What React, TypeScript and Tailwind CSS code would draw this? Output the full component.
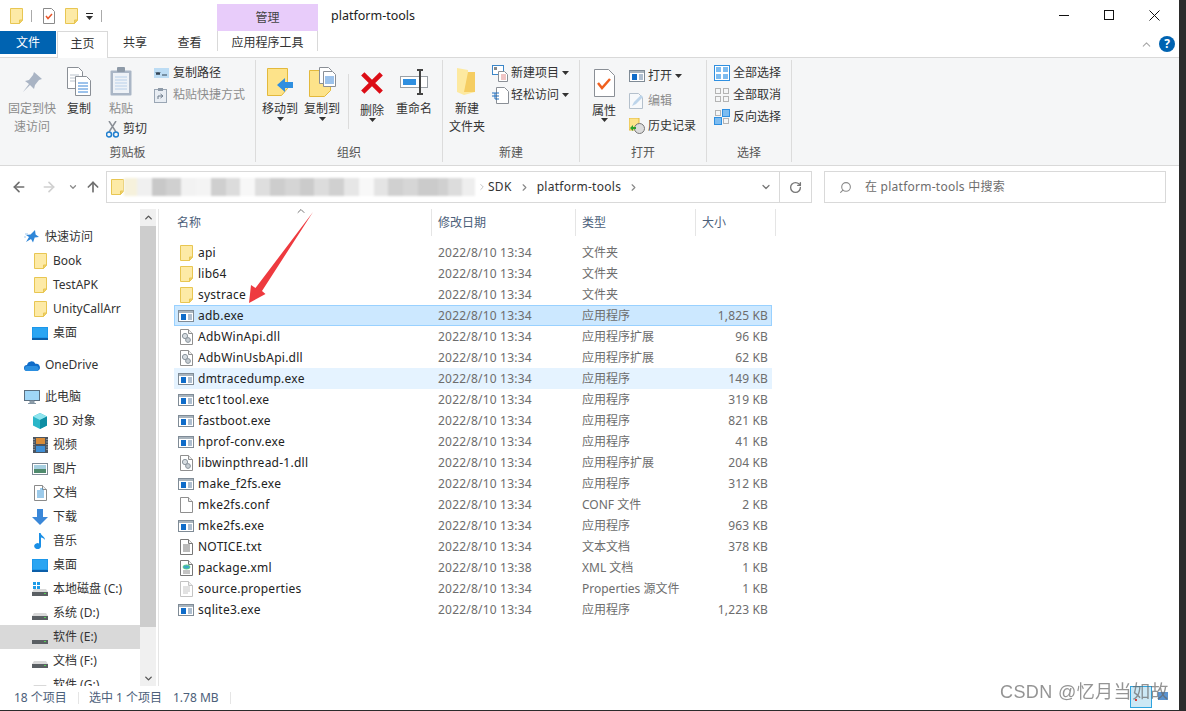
import React from 'react';
import { ArrowLeft, ArrowRight, ArrowUp, ChevronDown, ChevronRight, ChevronUp, RotateCw, Search } from 'lucide-react';

const Caret = () => (
  <svg width="7" height="4" viewBox="0 0 7 4"><path d="M0 0h7L3.5 4z" fill="#333" /></svg>
);

const FolderSm = () => (
  <svg width="13" height="16" viewBox="0 0 13 16">
    <path d="M.5.5h12v11.5l-3 3.5H.5z" fill="#fdeaa6" stroke="#e8c652" />
    <path d="M9.5 15.5V12h3z" fill="#f2d36c" stroke="#e8c652" />
  </svg>
);

const ExeIcon = () => (
  <svg width="16" height="12" viewBox="0 0 16 12">
    <rect x=".5" y=".5" width="15" height="11" fill="#fff" stroke="#7f8b96" />
    <rect x="1" y="1" width="14" height="2" fill="#a9b4bd" />
    <rect x="3" y="4" width="5" height="6" fill="#0f6cc9" />
    <path d="M10 5h4M10 7h4M10 9h4" stroke="#5f7fa0" />
  </svg>
);

const Page = ({ children, stroke = '#8f8f8f' }: { children?: React.ReactNode; stroke?: string }) => (
  <svg width="13" height="16" viewBox="0 0 13 16">
    <path d="M.5.5h8l4 4v11H.5z" fill="#fff" stroke={stroke} />
    <path d="M8.5.5v4h4" fill="#eee" stroke={stroke} />
    {children}
  </svg>
);

const DllIcon = () => (
  <Page>
    <circle cx="5" cy="7" r="2.6" fill="#d7dde2" stroke="#8a949c" />
    <circle cx="8" cy="11" r="2.4" fill="#c6cdd3" stroke="#8a949c" />
  </Page>
);
const ConfIcon = () => <Page />;
const TxtIcon = () => (
  <Page stroke="#777">
    <path d="M3 6h7M3 8h7M3 10h7M3 12h7" stroke="#777" />
  </Page>
);
const XmlIcon = () => (
  <Page stroke="#777">
    <ellipse cx="6.5" cy="7" rx="3.5" ry="2" fill="#3fa7c9" stroke="#5c8" />
    <path d="M3 11h7M3 13h7" stroke="#888" />
  </Page>
);
const PropsIcon = () => (
  <Page stroke="#c4c4c4">
    <path d="M3 6h7M3 8h7M3 10h7M3 12h5" stroke="#c4c4c4" />
  </Page>
);

const StarIcon = () => (
  <svg width="16" height="16" viewBox="0 0 16 16">
    <path d="M11 1l.6 4.5L15 8l-4.3.6L9 13.5 7 10l-5 3 3-5-3-2 4.5-.5z" fill="#2f86d8" />
    <path d="M1 5h3M0 8h2" stroke="#9cc7ee" />
  </svg>
);
const DesktopIcon = () => (
  <svg width="16" height="13" viewBox="0 0 16 13">
    <rect width="16" height="12" fill="#1c97ea" />
    <rect x="1" y="1" width="14" height="9" fill="#2aa5f2" />
    <path d="M0 12h16" stroke="#0b5ea8" strokeWidth="2" />
  </svg>
);
const CloudIcon = () => (
  <svg width="16" height="11" viewBox="0 0 16 11">
    <path d="M3 11a3 3 0 010-6 4.5 4.5 0 018.4-1.2A3.6 3.6 0 0113 11z" fill="#0f6cc9" />
    <path d="M3 11a2.5 2.5 0 01.5-5h9a2.6 2.6 0 01.5 5z" fill="#2b8fe0" />
  </svg>
);
const PcIcon = () => (
  <svg width="16" height="15" viewBox="0 0 16 15">
    <rect x=".5" y=".5" width="15" height="10" fill="#9fd6f7" stroke="#5b6f80" />
    <path d="M6 11h4v2H6zM4 13.5h8" fill="#9aa6b0" stroke="#8395a3" />
  </svg>
);
const CubeIcon = () => (
  <svg width="16" height="16" viewBox="0 0 16 16">
    <path d="M8 0l7 3.5v9L8 16l-7-3.5v-9z" fill="#2bb6c8" />
    <path d="M8 0l7 3.5L8 7 1 3.5z" fill="#8fe4ee" />
    <path d="M8 7l7-3.5v9L8 16z" fill="#0e8ea3" />
  </svg>
);
const FilmIcon = () => (
  <svg width="15" height="16" viewBox="0 0 15 16">
    <rect width="15" height="16" fill="#4b5560" />
    <rect x="3" y="1" width="9" height="6" fill="#d98c38" />
    <rect x="3" y="9" width="9" height="6" fill="#3f8fd6" />
    <path d="M1 2v12M14 2v12" stroke="#ccc" strokeDasharray="1 1.5" />
  </svg>
);
const PictureIcon = () => (
  <svg width="16" height="12" viewBox="0 0 16 12">
    <rect x=".5" y=".5" width="15" height="11" fill="#fff" stroke="#7f8b96" />
    <rect x="2" y="2" width="12" height="4" fill="#a6cfe0" />
    <rect x="2" y="6" width="12" height="4" fill="#4f8a6d" />
  </svg>
);
const DocIcon = () => (
  <Page stroke="#8a8a8a">
    <path d="M6 4h3M3 6h7M3 8h7M3 10h7M3 12h7" stroke="#3b96d6" />
  </Page>
);
const DownloadIcon = () => (
  <svg width="16" height="16" viewBox="0 0 16 16">
    <path d="M5 0h6v8h5l-8 8-8-8h5z" fill="#3a87d8" />
  </svg>
);
const MusicIcon = () => (
  <svg width="12" height="16" viewBox="0 0 12 16">
    <path d="M5 0h1.6c.4 3 4.400 3.500 4.400 7-1-1.500-2.500-2-4-2.400V13a3.400 3 0 11-2-2.600z" fill="#1a8fe6" />
  </svg>
);
const DriveIcon = ({ win }: { win?: boolean }) => (
  <svg width="16" height="14" viewBox="0 0 16 14">
    {win && <path d="M1 0h3v3H1zM5 0h3v3H5zM1 4h3v3H1zM5 4h3v3H5z" fill="#1c9be8" />}
    <path d="M2 7h12l2 3H0z" fill="#d9d9d9" />
    <rect y="10" width="16" height="4" fill="#5a5f63" />
    <rect x="12" y="11" width="2" height="1" fill="#52d052" />
  </svg>
);

const navItems = [
  { label: '快速访问', icon: <StarIcon />, top: true },
  { label: 'Book', icon: <FolderSm /> },
  { label: 'TestAPK', icon: <FolderSm /> },
  { label: 'UnityCallArr', icon: <FolderSm /> },
  { label: '桌面', icon: <DesktopIcon />, gapAfter: true },
  { label: 'OneDrive', icon: <CloudIcon />, top: true, gapAfter: true },
  { label: '此电脑', icon: <PcIcon />, top: true },
  { label: '3D 对象', icon: <CubeIcon /> },
  { label: '视频', icon: <FilmIcon /> },
  { label: '图片', icon: <PictureIcon /> },
  { label: '文档', icon: <DocIcon /> },
  { label: '下载', icon: <DownloadIcon /> },
  { label: '音乐', icon: <MusicIcon /> },
  { label: '桌面', icon: <DesktopIcon /> },
  { label: '本地磁盘 (C:)', icon: <DriveIcon win /> },
  { label: '系统 (D:)', icon: <DriveIcon /> },
  { label: '软件 (E:)', icon: <DriveIcon />, selected: true },
  { label: '文档 (F:)', icon: <DriveIcon /> },
  { label: '软件 (G:)', icon: <DriveIcon /> },
];

const D = '2022/8/10 13:34';
const files = [
  { name: 'api', date: D, type: '文件夹', size: '', icon: <FolderSm /> },
  { name: 'lib64', date: D, type: '文件夹', size: '', icon: <FolderSm /> },
  { name: 'systrace', date: D, type: '文件夹', size: '', icon: <FolderSm /> },
  { name: 'adb.exe', date: D, type: '应用程序', size: '1,825 KB', icon: <ExeIcon />, state: 'selected' },
  { name: 'AdbWinApi.dll', date: D, type: '应用程序扩展', size: '96 KB', icon: <DllIcon /> },
  { name: 'AdbWinUsbApi.dll', date: D, type: '应用程序扩展', size: '62 KB', icon: <DllIcon /> },
  { name: 'dmtracedump.exe', date: D, type: '应用程序', size: '149 KB', icon: <ExeIcon />, state: 'hover' },
  { name: 'etc1tool.exe', date: D, type: '应用程序', size: '319 KB', icon: <ExeIcon /> },
  { name: 'fastboot.exe', date: D, type: '应用程序', size: '821 KB', icon: <ExeIcon /> },
  { name: 'hprof-conv.exe', date: D, type: '应用程序', size: '41 KB', icon: <ExeIcon /> },
  { name: 'libwinpthread-1.dll', date: D, type: '应用程序扩展', size: '204 KB', icon: <DllIcon /> },
  { name: 'make_f2fs.exe', date: D, type: '应用程序', size: '312 KB', icon: <ExeIcon /> },
  { name: 'mke2fs.conf', date: D, type: 'CONF 文件', size: '2 KB', icon: <ConfIcon /> },
  { name: 'mke2fs.exe', date: D, type: '应用程序', size: '963 KB', icon: <ExeIcon /> },
  { name: 'NOTICE.txt', date: D, type: '文本文档', size: '378 KB', icon: <TxtIcon /> },
  { name: 'package.xml', date: '2022/8/10 13:38', type: 'XML 文档', size: '1 KB', icon: <XmlIcon /> },
  { name: 'source.properties', date: D, type: 'Properties 源文件', size: '1 KB', icon: <PropsIcon /> },
  { name: 'sqlite3.exe', date: D, type: '应用程序', size: '1,223 KB', icon: <ExeIcon /> },
];

const blurBlocks = [
  'w-[13px] bg-[#f6f1dc]', 'w-[15px] bg-[#f0f0f0]', 'w-[15px] bg-[#c8c8c8]', 'w-[15px] bg-[#d0d0d0]',
  'w-[15px] bg-[#f2f2f2]', 'w-[15px] bg-[#f4f4f4]', 'w-[15px] bg-[#cfcfcf]', 'w-[15px] bg-[#dcdcdc]',
  'w-[15px] bg-[#f7f7f7]', 'w-[15px] bg-[#dedede]', 'w-[15px] bg-[#cdcdcd]', 'w-[15px] bg-[#d5d5d5]',
  'w-[15px] bg-[#cbcbcb]', 'w-[15px] bg-[#dcdcdc]', 'w-[15px] bg-[#d0d0d0]', 'w-[15px] bg-[#e6e6e6]',
  'w-[15px] bg-[#f8f8f8]', 'w-[15px] bg-[#e4e4e4]', 'w-[15px] bg-[#d0d0d0]', 'w-[15px] bg-[#d6d6d6]',
  'w-[20px] bg-[#cbcbcb]', 'w-[10px] bg-[#d0d0d0]', 'w-[15px] bg-[#dcdcdc]', 'w-[13px] bg-[#eeeeee]',
];

function BigButton({ lines, icon, width, gray, caret, low, className = '' }: {
  lines: string[]; icon: React.ReactNode; width: string; gray?: boolean; caret?: boolean; low?: boolean; className?: string;
}) {
  return (
    <div className={`flex shrink-0 flex-col items-center ${width} ${className}`}>
      <div className={`flex w-full items-center justify-center ${low ? 'h-[39px]' : 'h-[37px]'}`}>{icon}</div>
      {lines.map(l => (
        <div key={l} className={`h-[18px] whitespace-nowrap leading-[18px] ${gray ? 'text-[#8c8c8c]' : 'text-[#333]'}`}>{l}</div>
      ))}
      {caret && <div className={low ? '-mt-[2px]' : '-mt-[1px]'}><Caret /></div>}
    </div>
  );
}

function SmallButton({ label, icon, gray, caret, rowH = 'h-[22px]' }: {
  label: string; icon: React.ReactNode; gray?: boolean; caret?: boolean; rowH?: string;
}) {
  return (
    <div className={`flex items-center whitespace-nowrap ${rowH} ${gray ? 'text-[#8c8c8c]' : 'text-[#333]'}`}>
      <div className="flex w-[19px] shrink-0 items-center">{icon}</div>
      <span>{label}</span>
      {caret && <span className="ml-[3px] flex"><Caret /></span>}
    </div>
  );
}

function Group({ label, width, children, border = true }: { label: string; width: string; children: React.ReactNode; border?: boolean }) {
  return (
    <div className={`flex shrink-0 flex-col ${width} ${border ? 'border-r border-[#dcdcdc]' : ''}`}>
      <div className="flex h-[84px] items-start pt-px">{children}</div>
      <div className="h-[18px] text-center leading-[18px] text-[#555]">{label}</div>
    </div>
  );
}

export default function App() {
  return (
    <div className="relative flex h-[711px] w-[1186px] overflow-hidden bg-[#2b2b2b] text-[12px] font-['Noto_Sans','Noto_Sans_CJK_SC',sans-serif]">
      <div className="flex h-[710px] w-[1179px] flex-col bg-white">
        {/* Title bar */}
        <div className="flex h-[31px] shrink-0 items-start">
          <div className="flex w-[217px] items-center pl-[10px] pt-[8px]">
            <FolderSm />
            <div className="ml-[8px] h-[12px] w-px bg-[#aaa]" />
            <div className="ml-[11px]">
              <svg width="12" height="16" viewBox="0 0 12 16">
                <path d="M.5.5h8l3 3v12H.5z" fill="#fff" stroke="#8a8a8a" />
                <path d="M3 8l2 2.500L9 6" fill="none" stroke="#e8562a" strokeWidth="1.5" />
              </svg>
            </div>
            <div className="ml-[10px]"><FolderSm /></div>
            <div className="ml-[8px] flex flex-col items-center gap-[2px]">
              <div className="h-px w-[7px] bg-[#222]" />
              <Caret />
            </div>
            <div className="ml-[8px] h-[12px] w-px bg-[#aaa]" />
          </div>
          <div className="mt-[4px] flex h-[27px] w-[101px] items-center justify-center bg-[#e8ccfa] text-[#444]">管理</div>
          <div className="ml-[13px] mt-[6px] text-[12.5px] leading-[20px] text-[#222]">platform-tools</div>
          <div className="ml-auto flex pr-[19px] pt-[10px]">
            <svg width="10" height="11" viewBox="0 0 10 11" className="mr-[35px]"><path d="M0 5.500h10" stroke="#111" /></svg>
            <svg width="10" height="11" viewBox="0 0 10 11" className="mr-[35px]"><rect x=".5" y=".5" width="9" height="9" fill="none" stroke="#111" /></svg>
            <svg width="11" height="11" viewBox="0 0 11 11"><path d="M.5.5l10 10M10.500.5l-10 10" stroke="#111" /></svg>
          </div>
        </div>

        {/* Ribbon tabs */}
        <div className="flex h-[26px] shrink-0 items-start">
          <div className="flex h-[23px] w-[56px] items-center justify-center bg-[#0063b1] text-white">文件</div>
          <div className="relative z-10 ml-px flex h-[27px] w-[51px] items-center justify-center border-x border-t border-[#d9d9d9] bg-white pb-[3px] text-[#333]">主页</div>
          <div className="flex h-[23px] w-[54px] items-center justify-center text-[#333]">共享</div>
          <div className="flex h-[23px] w-[55px] items-center justify-center text-[#333]">查看</div>
          <div className="flex h-[20px] w-[101px] items-center justify-center border-x border-[#d9d9d9] pt-[3px] text-[#333]">应用程序工具</div>
          <div className="ml-auto flex items-center pr-[4px] pt-[5px]">
            <ChevronUp size={13} className="mr-[6px] text-[#a8a8a8]" />
            <div className="flex h-[16px] w-[16px] items-center justify-center rounded-full bg-[#0063b1] text-[12px] font-bold leading-none text-white">?</div>
          </div>
        </div>

        {/* Ribbon */}
        <div className="flex h-[109px] shrink-0 border-y border-[#d9d9d9] bg-[#f5f6f7] pb-[3px] pt-[2px]">
          <Group label="剪贴板" width="w-[256px]">
            <BigButton width="w-[48px]" className="ml-[8px] pt-[2px]" gray lines={['固定到快', '速访问']} icon={
              <svg width="21" height="22" viewBox="0 0 21 22">
                <path d="M12 1l8 7-3 1-4 5-1 4-4-4-7 7 6-8-4-3 4-1 4-5z" fill="#a9b4c4" />
              </svg>
            } />
            <BigButton width="w-[46px]" className="pt-[2px]" lines={['复制']} icon={
              <svg width="24" height="29" viewBox="0 0 24 29">
                <path d="M.5.5h11l4 4v17H.5z" fill="#fff" stroke="#8a8f96" />
                <path d="M3 8h9M3 11h9M3 14h9" stroke="#b9c2cc" />
                <path d="M8.500 9.500h11l4 4v15h-15z" fill="#fff" stroke="#8a8f96" />
                <path d="M11 16h10M11 19h10M11 22h10M11 25h10" stroke="#3b86d8" />
              </svg>
            } />
            <div className="flex w-[52px] shrink-0 flex-col pt-[2px]">
              <BigButton width="w-[38px]" gray lines={['粘贴']} icon={
                <svg width="22" height="29" viewBox="0 0 22 29">
                  <rect x=".5" y="3.500" width="21" height="25" rx="1" fill="#aab6c6" />
                  <rect x="3" y="6" width="16" height="20" fill="#eef2f7" />
                  <path d="M5 10h12M5 13h12M5 16h12M5 19h12M5 22h12" stroke="#b8d0ea" />
                  <rect x="7" y="0" width="8" height="5" rx="1" fill="#8e9aa8" />
                </svg>
              } />
              <div className="ml-[4px] mt-[2px] flex h-[18px] items-center whitespace-nowrap text-[#333]">
                <svg width="13" height="17" viewBox="0 0 13 17" className="mr-[4px] shrink-0">
                  <path d="M3 0l7 11M10 0L3 11" stroke="#8a8f96" strokeWidth="1.5" />
                  <circle cx="3" cy="13.500" r="2.500" fill="none" stroke="#1f7fd0" strokeWidth="1.5" />
                  <circle cx="10" cy="13.500" r="2.500" fill="none" stroke="#1f7fd0" strokeWidth="1.5" />
                </svg>
                剪切
              </div>
            </div>
            <div className="flex flex-col pt-px">
              <SmallButton label="复制路径" icon={
                <svg width="15" height="10" viewBox="0 0 15 10"><rect width="15" height="10" fill="#bcdcf4" /><path d="M2 4l1 3 1-3 1 3 1-3M8 7h5" stroke="#345" fill="none" /></svg>
              } />
              <SmallButton label="粘贴快捷方式" gray icon={
                <svg width="13" height="15" viewBox="0 0 13 15"><rect x=".5" y="1.500" width="12" height="13" fill="#e8edf3" stroke="#9aa6b4" /><rect x="4" y="0" width="5" height="3" fill="#8e9aa8" /><path d="M4 11V8h4M6.500 6L9 8 6.500 10" stroke="#6d7b8a" fill="none" /></svg>
              } />
            </div>
          </Group>

          <Group label="组织" width="w-[187px]">
            <BigButton width="w-[36px]" className="ml-[6px] pt-[2px]" caret lines={['移动到']} icon={
              <svg width="27" height="28" viewBox="0 0 27 28">
                <path d="M.5.5h20v20l-6 7H.5z" fill="#fde38a" stroke="#e3b93c" />
                <path d="M10 17l8-7v4h8v6h-8v4z" fill="#2f8fe0" />
              </svg>
            } />
            <BigButton width="w-[36px]" className="ml-[6px] pt-[2px]" caret lines={['复制到']} icon={
              <svg width="27" height="30" viewBox="0 0 27 30">
                <path d="M.5 3.500h21v20l-6 6H.5z" fill="#fde38a" stroke="#e3b93c" />
                <path d="M10.500.5h9l3 3v13h-12z" fill="#fff" stroke="#8a8f96" />
                <path d="M14.500 4.500h9l3 3v12h-12z" fill="#fff" stroke="#8a8f96" />
                <path d="M16 10h9M16 12h9M16 14h9M16 16h9" stroke="#3b86d8" />
              </svg>
            } />
            <div className="ml-[8px] mt-[13px] h-[55px] w-px shrink-0 bg-[#dcdcdc]" />
            <BigButton width="w-[24px]" className="ml-[11px] pt-[2px]" low caret lines={['删除']} icon={
              <svg width="26" height="26" viewBox="0 0 26 26"><path d="M3 3l20 20M23 3L3 23" stroke="#dc0d16" strokeWidth="5" /></svg>
            } />
            <BigButton width="w-[36px]" className="ml-[12px] pt-[2px]" lines={['重命名']} icon={
              <svg width="29" height="26" viewBox="0 0 29 26">
                <rect x=".5" y="7.500" width="27" height="11" fill="#fff" stroke="#9aa0a6" />
                <rect x="3" y="10" width="13" height="6" fill="#2f8fe0" />
                <path d="M17 1h6M20 1v24M17 25h6" stroke="#444" strokeWidth="2" fill="none" />
              </svg>
            } />
          </Group>

          <Group label="新建" width="w-[137px]">
            <BigButton width="w-[36px]" className="ml-[6px] pt-[2px]" lines={['新建', '文件夹']} icon={
              <svg width="20" height="27" viewBox="0 0 20 27">
                <path d="M0 0l11 2v2h7v20l-11 3-7-3z" fill="#fde9a0" />
                <path d="M11 4h7v20H7z" fill="#f5cd62" />
              </svg>
            } />
            <div className="ml-[7px] flex flex-col pt-px">
              <SmallButton label="新建项目" caret icon={
                <svg width="17" height="17" viewBox="0 0 17 17">
                  <rect x=".5" y=".5" width="11" height="9" fill="#fff" stroke="#3b86c8" />
                  <rect x="2" y="2" width="3" height="3" fill="#888" />
                  <path d="M6.500 6.500h6l3 3v7h-9z" fill="#fff" stroke="#8a8f96" />
                  <path d="M9 10h5M9 12h5M9 14h5" stroke="#e08a8a" />
                </svg>
              } />
              <SmallButton label="轻松访问" caret icon={
                <svg width="17" height="17" viewBox="0 0 17 17">
                  <path d="M4.500.5h8l4 4v12h-12z" fill="#fff" stroke="#8a8f96" />
                  <path d="M0 6h7M0 9h7M3 12h4M3 6v6" stroke="#1f6fc0" fill="none" />
                </svg>
              } />
            </div>
          </Group>

          <Group label="打开" width="w-[127px]">
            <BigButton width="w-[24px]" className="ml-[12px] pt-[2px]" low caret lines={['属性']} icon={
              <svg width="21" height="28" viewBox="0 0 21 28">
                <path d="M.5.5h14l6 6v21H.5z" fill="#fff" stroke="#8a8f96" />
                <path d="M4 14l4 5 8-9" fill="none" stroke="#f0601f" strokeWidth="2.500" />
              </svg>
            } />
            <div className="ml-[13px] mt-[2px] flex flex-col">
              <SmallButton rowH="h-[25px]" label="打开" caret icon={
                <svg width="16" height="12" viewBox="0 0 16 12">
                  <rect x=".5" y=".5" width="15" height="11" fill="#fff" stroke="#7f8b96" />
                  <rect x="1" y="1" width="14" height="2" fill="#a9b4bd" />
                  <rect x="3" y="4" width="5" height="6" fill="#0f6cc9" />
                  <path d="M10 5h4M10 7h4M10 9h4" stroke="#5f7fa0" />
                </svg>
              } />
              <SmallButton rowH="h-[25px]" label="编辑" gray icon={
                <svg width="15" height="16" viewBox="0 0 15 16">
                  <path d="M.5.5h9l4 4v11H.5z" fill="#f7f9fb" stroke="#b4c0cc" />
                  <path d="M3 13l2-4 7-7 2 2-7 7z" fill="#bcd4ea" />
                </svg>
              } />
              <SmallButton rowH="h-[25px]" label="历史记录" icon={
                <svg width="16" height="16" viewBox="0 0 16 16">
                  <path d="M0 0h10v12H0z" fill="#fde38a" stroke="#e3b93c" />
                  <circle cx="10.500" cy="10.500" r="5" fill="#dcdcdc" stroke="#777" />
                  <path d="M1 10l3-3v2h3v2H4v2z" fill="#2ca02c" />
                </svg>
              } />
            </div>
          </Group>

          <Group label="选择" width="w-[85px]">
            <div className="ml-[7px] flex flex-col pt-px">
              <SmallButton label="全部选择" icon={
                <svg width="16" height="16" viewBox="0 0 16 16">
                  <rect x=".5" y=".5" width="15" height="15" fill="#fff" stroke="#2f8fe0" />
                  <rect x="2" y="2" width="5" height="5" fill="#7dbcf0" /><rect x="9" y="2" width="5" height="5" fill="#7dbcf0" />
                  <rect x="2" y="9" width="5" height="5" fill="#7dbcf0" /><rect x="9" y="9" width="5" height="5" fill="#7dbcf0" />
                </svg>
              } />
              <SmallButton label="全部取消" icon={
                <svg width="16" height="16" viewBox="0 0 16 16" fill="none" stroke="#b4b4b4">
                  <rect x="1.500" y="1.500" width="5" height="5" /><rect x="9.500" y="1.500" width="5" height="5" />
                  <rect x="1.500" y="9.500" width="5" height="5" /><rect x="9.500" y="9.500" width="5" height="5" />
                </svg>
              } />
              <SmallButton label="反向选择" icon={
                <svg width="16" height="16" viewBox="0 0 16 16">
                  <rect x="1.500" y="1.500" width="5" height="5" fill="none" stroke="#b4b4b4" />
                  <rect x="8.500" y=".5" width="7" height="7" fill="#7dbcf0" stroke="#2f8fe0" />
                  <rect x=".5" y="8.500" width="7" height="7" fill="#7dbcf0" stroke="#2f8fe0" />
                  <rect x="9.500" y="9.500" width="5" height="5" fill="none" stroke="#b4b4b4" />
                </svg>
              } />
            </div>
          </Group>
        </div>

        {/* Address bar */}
        <div className="flex h-[40px] shrink-0 items-start pt-[5px]">
          <div className="flex h-[32px] w-[106px] shrink-0 items-center pl-[11px]">
            <ArrowLeft size={16} strokeWidth={2.5} className="text-[#6f6f6f]" />
            <ArrowRight size={16} strokeWidth={2.5} className="ml-[14px] text-[#d0d0d0]" />
            <ChevronDown size={10} strokeWidth={3} className="ml-[11px] text-[#8c8c8c]" />
            <ArrowUp size={16} strokeWidth={2.5} className="ml-[7px] text-[#6f6f6f]" />
          </div>
          <div className="flex h-[32px] w-[706px] shrink-0 items-center border border-[#d9d9d9] pl-[4px] tracking-[0.28px]">
            <FolderSm />
            <div className="flex h-[18px] w-[351px] shrink-0 blur-[1px]">
              {blurBlocks.map((c, i) => <div key={i} className={c} />)}
            </div>
            <ChevronRight size={10} className="ml-[2px] text-[#bbb]" />
            <span className="ml-[1px] text-[#333]">SDK</span>
            <ChevronRight size={11} strokeWidth={2.5} className="ml-[7px] text-[#888]" />
            <span className="ml-[7px] text-[#333]">platform-tools</span>
            <ChevronRight size={11} strokeWidth={2.5} className="ml-[7px] text-[#888]" />
            <div className="ml-auto flex h-full items-center">
              <ChevronDown size={12} strokeWidth={2.5} className="mr-[7px] text-[#777]" />
              <div className="flex h-full w-[32px] items-center justify-center border-l border-[#d9d9d9]">
                <RotateCw size={13} strokeWidth={2.5} className="text-[#777]" />
              </div>
            </div>
          </div>
          <div className="ml-[12px] flex h-[32px] w-[342px] items-center border border-[#d9d9d9] pl-[14px] text-[#6d6d6d]">
            <Search size={13} className="-scale-x-100 text-[#8a8a8a]" />
            <span className="ml-[13px] tracking-[0.25px]">在 platform-tools 中搜索</span>
          </div>
        </div>

        {/* Main */}
        <div className="flex h-[480px] shrink-0">
          <div className="flex w-[140px] shrink-0 flex-col overflow-hidden pt-[19px]">
            {navItems.map((n, i) => (
              <div key={i} className={`flex h-[24px] shrink-0 items-center gap-[5px] whitespace-nowrap text-[#333] ${n.top ? 'pl-[24px]' : 'pl-[32px]'} ${n.gapAfter ? 'mb-[8px]' : ''} ${n.selected ? 'bg-[#d9d9d9]' : ''}`}>
                <div className="flex w-[16px] shrink-0 justify-center">{n.icon}</div>
                <span>{n.label}</span>
              </div>
            ))}
          </div>
          <div className="mt-[3px] flex w-[16px] shrink-0 flex-col items-center bg-[#f0f0f0]">
            <div className="flex h-[17px] w-full items-center justify-center"><ChevronUp size={11} strokeWidth={3} className="text-[#555]" /></div>
            <div className="h-[401px] w-full bg-[#cdcdcd]" />
            <div className="mt-auto flex h-[16px] w-full items-center justify-center"><ChevronDown size={11} strokeWidth={3} className="text-[#555]" /></div>
          </div>
          <div className="ml-[2px] mt-[3px] w-px shrink-0 bg-[#e5e5e5]" />
          <div className="flex-1 pl-[15px] pt-[3px]">
            <div className="relative mb-[6px] flex h-[27px] text-[#4c607a]">
              <div className="flex w-[258px] items-center border-r border-[#e5e5e5] pl-[3px]">名称</div>
              <div className="flex w-[144px] items-center border-r border-[#e5e5e5] pl-[6px]">修改日期</div>
              <div className="flex w-[120px] items-center border-r border-[#e5e5e5] pl-[6px]">类型</div>
              <div className="flex w-[80px] items-center border-r border-[#e5e5e5] pl-[6px]">大小</div>
              <ChevronUp size={12} className="absolute left-[121px] top-[-4px] text-[#777]" />
            </div>
            {files.map(f => (
              <div key={f.name} className={`flex h-[21px] w-[598px] items-center border pl-[3px] ${f.state === 'selected' ? 'border-[#99d1ff] bg-[#cce8ff]' : f.state === 'hover' ? 'border-[#e5f3ff] bg-[#e5f3ff]' : 'border-transparent'}`}>
                <div className="mr-[4px] flex w-[16px] shrink-0 justify-center">{f.icon}</div>
                <div className="w-[240px] shrink-0 whitespace-nowrap tracking-[0.25px] text-[#222]">{f.name}</div>
                <div className="w-[144px] shrink-0 whitespace-nowrap tracking-[0.2px] text-[#6d6d6d]">{f.date}</div>
                <div className="w-[110px] shrink-0 whitespace-nowrap text-[#6d6d6d]">{f.type}</div>
                <div className="w-[76px] shrink-0 whitespace-nowrap text-right tracking-[0.15px] text-[#6d6d6d]">{f.size}</div>
              </div>
            ))}
          </div>
        </div>

        {/* Status bar */}
        <div className="flex h-[24px] shrink-0 items-center whitespace-nowrap pl-[14px] text-[#4c607a]">
          <span className="w-[64px]">18 个项目</span>
          <div className="h-[12px] w-px bg-[#e5e5e5]" />
          <span className="ml-[10px] w-[84px]">选中 1 个项目</span>
          <span className="w-[57px]">1.78 MB</span>
          <div className="h-[12px] w-px bg-[#e5e5e5]" />
        </div>
      </div>

      {/* Annotation arrow drawn over the list */}
      <svg width="1186" height="711" className="pointer-events-none absolute left-0 top-0">
        <path d="M313 212L262 291l3.500 3L249 303l2-18 4.500 3z" fill="#ee3a3f" />
      </svg>

      {/* Watermark */}
      <div className="pointer-events-none absolute left-[1130px] top-[686px] h-[22px] w-[22px] border border-[#2ea4e0] bg-[#cce8f5]" />
      <div className="pointer-events-none absolute left-[1135px] top-[699px] h-[2px] w-[2px] bg-[#d8403a]" />
      <div className="pointer-events-none absolute left-[1158px] top-[692px] h-[8px] w-[10px] bg-[#5b93cf]" />
      <div className="pointer-events-none absolute left-[1000px] top-[679px] whitespace-nowrap text-[18px] leading-[26px] tracking-[0.4px] text-[#666]/70 blur-[0.3px] font-['Liberation_Sans','Noto_Sans_CJK_SC',sans-serif]">CSDN @忆月当如故</div>
    </div>
  );
}
